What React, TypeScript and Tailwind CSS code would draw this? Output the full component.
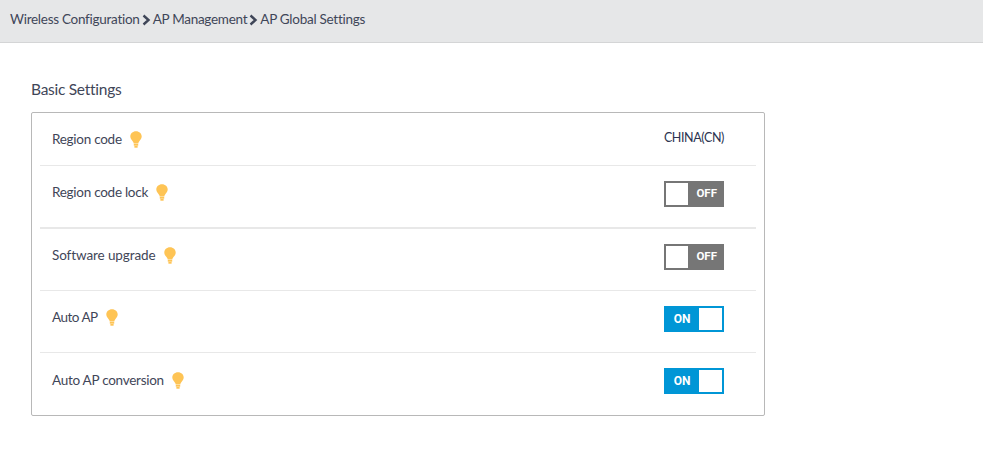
const Bulb = () => (
  <svg width="12" height="17" viewBox="0 0 12 17" className="block shrink-0">
    <path d="M6 0.2C2.7 0.2 0.3 2.6 0.3 5.6C0.3 8 1.9 9.1 3 10.7C3.4 11.3 3.6 11.8 3.7 12.4H8.3C8.4 11.8 8.6 11.3 9 10.7C10.1 9.1 11.7 8 11.7 5.6C11.7 2.6 9.3 0.2 6 0.2Z" fill="#fec455" />
    <rect x="3.8" y="12.9" width="4.4" height="1.8" fill="#fec455" />
    <rect x="4.4" y="15" width="3.2" height="1.7" fill="#fec455" />
  </svg>
);

const Chevron = () => (
  <svg width="9" height="12" viewBox="0 0 9 12" className="mx-[2px] block shrink-0">
    <path d="M1.5 1.5L6.5 6L1.5 10.5" fill="none" stroke="#3f4658" strokeWidth="2.4" />
  </svg>
);

const Toggle = ({ on }: { on: boolean }) =>
  on ? (
    <div className="flex h-[26px] w-[60px] border-2 border-[#0096d6] bg-[#0096d6] font-['Roboto',sans-serif] tracking-normal">
      <span className="flex w-[33px] items-center justify-center pr-[1px] text-[12px] font-bold text-white">ON</span>
      <span className="flex-1 bg-white" />
    </div>
  ) : (
    <div className="flex h-[26px] w-[60px] border-2 border-[#767676] bg-[#767676] font-['Roboto',sans-serif] tracking-normal">
      <span className="w-[22px] bg-white" />
      <span className="flex flex-1 items-center justify-end pr-[5px] text-[11.5px] font-bold text-white">OFF</span>
    </div>
  );

const Row = ({ label, right, className, labelClass = "mb-[2px]" }: { label: string; right: React.ReactNode; className: string; labelClass?: string }) => (
  <div className={`flex items-center justify-between pl-3 pr-8 ${className}`}>
    <div className={`flex items-center gap-2 ${labelClass}`}>
      <span>{label}</span>
      <Bulb />
    </div>
    {right}
  </div>
);

export default function App() {
  return (
    <div className="h-[474px] w-[983px] overflow-hidden bg-white font-['Lato',sans-serif] text-[13.5px] tracking-[-0.27px] text-[#3f4658]">
      <div className="flex h-[43px] items-center border-b border-[#d4d5d6] bg-[#e6e7e8] pl-[10px] pb-[3px]">
        <span>Wireless Configuration</span>
        <Chevron />
        <span>AP Management</span>
        <Chevron />
        <span>AP Global Settings</span>
      </div>
      <div className="pl-[31px] pt-[35px]">
        <h2 className="mb-[12px] h-[22px] text-[15.5px] leading-[22px]">Basic Settings</h2>
        <div className="h-[304px] w-[734px] rounded-[2px] border border-[#b8b8b8] px-2">
          <Row className="h-[53px] border-b border-[#e8e8e8]" labelClass="" label="Region code" right={<span className="mb-[1px] text-[12.5px] tracking-[-0.4px] text-[#2c3350]">CHINA(CN)</span>} />
          <Row className="h-[63px] border-b-2 border-[#e8e8e8] pb-[6px]" label="Region code lock" right={<Toggle on={false} />} />
          <Row className="h-[62px] border-b border-[#e8e8e8] pb-[6px]" labelClass="mb-[2px] tracking-[-0.1px]" label="Software upgrade" right={<Toggle on={false} />} />
          <Row className="h-[62px] border-b border-[#e8e8e8] pb-[6px]" labelClass="mb-[2px] tracking-[-0.5px]" label="Auto AP" right={<Toggle on />} />
          <Row className="h-[62px] pb-[6px]" label="Auto AP conversion" right={<Toggle on />} />
        </div>
      </div>
    </div>
  );
}
